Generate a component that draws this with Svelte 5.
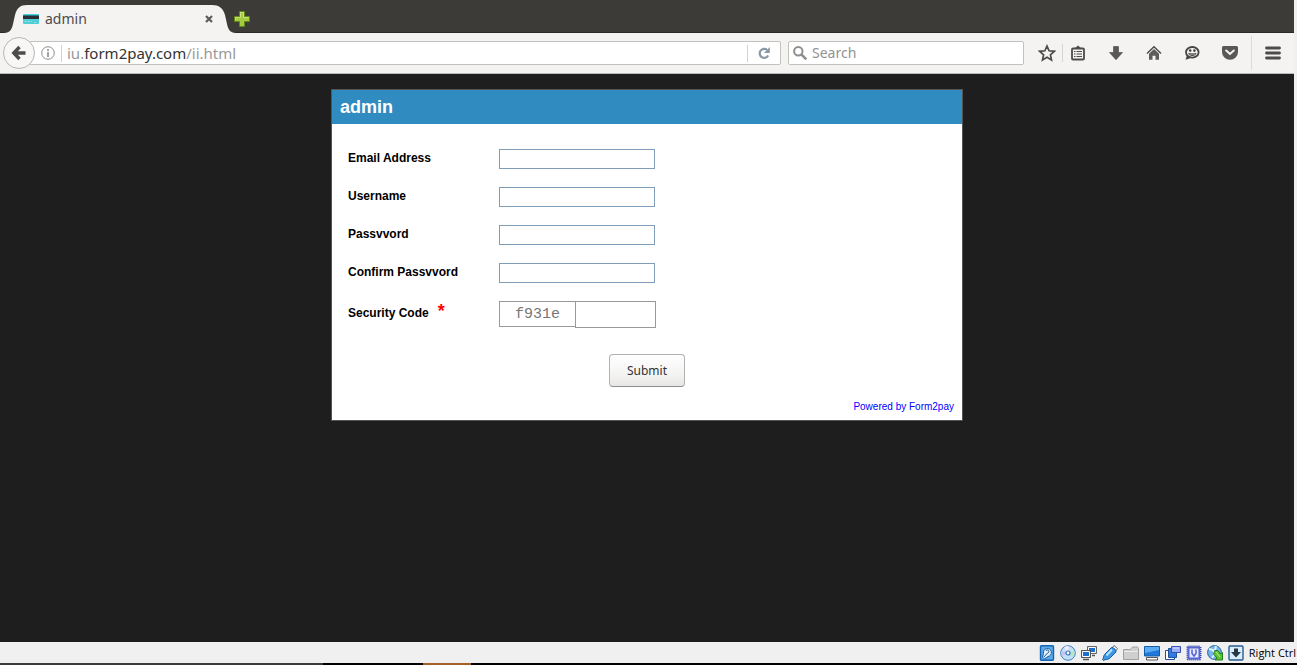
<script>
  const fields = [
    { id: 'email', label: 'Email Address', type: 'text' },
    { id: 'username', label: 'Username', type: 'text' },
    { id: 'pass', label: 'Passvvord', type: 'password' },
    { id: 'confirm', label: 'Confirm Passvvord', type: 'password' }
  ];
</script>

<div class="desktop">
  <div class="window">
    <div class="tabs">
      <div class="tab">
        <svg class="shape" width="232" height="29" viewBox="0 0 232 29" aria-hidden="true">
          <path d="M0 29C6 29 8 25 9 20L11 11C13 4 16 1 23 1H208C215 1 219 4 221 11L223 20C224 25 226 29 232 29Z" fill="#f4f3f1" />
        </svg>
        <svg class="card-icon" width="16" height="10" viewBox="0 0 16 10" aria-hidden="true">
          <rect width="16" height="10" rx="1" fill="#4fcfd3" />
          <path d="M0 1h16v1H0z" fill="#237e88" />
          <path d="M0 2h16v3H0z" fill="#2b3036" />
          <path d="M2 7.500h7M11 8.500h3" stroke="#8fe6e8" stroke-dasharray="2 1" />
        </svg>
        <span class="title">admin</span>
        <button class="plain close" aria-label="Close tab">
          <svg width="8" height="8" viewBox="0 0 8 8"><path d="M1 1l6 6M7 1L1 7" stroke="#5d5c59" stroke-width="2.200" /></svg>
        </button>
      </div>
      <button class="plain new" aria-label="New tab">
        <svg width="16" height="16" viewBox="0 0 16 16">
          <path d="M5.500.5h5v5h5v5h-5v5h-5v-5h-5v-5h5z" fill="#a4ca42" stroke="#5c8a14" />
          <path d="M6.500 6.500v-5h3v5h5" fill="none" stroke="#cbe27f" />
          <path d="M1.500 9V6.500h5" fill="none" stroke="#c5e077" />
        </svg>
      </button>
    </div>

    <div class="nav">
      <button class="plain back" aria-label="Back">
        <svg width="16" height="16" viewBox="0 0 16 16"><path d="M8.500 2L2.800 8l5.700 6M3 8h11.500" fill="none" stroke="#4c4c4c" stroke-width="3.400" /></svg>
      </button>
      <div class="url">
        <svg width="14" height="14" viewBox="0 0 14 14" aria-hidden="true">
          <circle cx="7" cy="7" r="6.300" fill="none" stroke="#8c8c8c" />
          <path d="M7 3v2M7 6v5" stroke="#8c8c8c" stroke-width="1.600" />
        </svg>
        <span class="sep"></span>
        <span class="address">iu.<b>form2pay.com</b>/ii.html</span>
        <span class="sep"></span>
        <button class="plain reload" aria-label="Reload">
          <svg width="12" height="12" viewBox="0 0 12 12">
            <path d="M9.200 3A4.500 4.500 0 1 0 10.200 8.500" fill="none" stroke="#8a98a5" stroke-width="2.200" />
            <path d="M11.800 0v6H6z" fill="#8a98a5" />
          </svg>
        </button>
      </div>
      <label class="search">
        <svg width="14" height="14" viewBox="0 0 14 14" aria-hidden="true">
          <circle cx="5.300" cy="5.300" r="4.200" fill="none" stroke="#8e8e8e" stroke-width="2" />
          <path d="M8.300 8.300l5 5" stroke="#8e8e8e" stroke-width="2.600" />
        </svg>
        <input type="text" placeholder="Search" aria-label="Search" />
      </label>
      <div class="tools">
        <button class="plain first" aria-label="Bookmark this page">
          <svg width="18" height="18" viewBox="0 0 18 18"><path d="M9 2l2.100 4.800 5.200.5-3.900 3.500 1.100 5.200L9 13.300 4.500 16l1.100-5.200-3.900-3.500 5.200-.5z" fill="none" stroke="#4c4c4c" stroke-width="1.700" /></svg>
        </button>
        <button class="plain" aria-label="Bookmarks">
          <svg width="16" height="16" viewBox="0 0 16 16">
            <path d="M4.500 3.500L8 .5l3.500 3z" fill="#4c4c4c" />
            <rect x="2" y="3.500" width="12" height="11" rx="1" fill="#f4f3f1" stroke="#4c4c4c" stroke-width="1.800" />
            <path d="M4 6.500h1.500M6.500 6.500H12M4 9h1.500M6.500 9H12M4 11.500h1.500M6.500 11.500H12" stroke="#4c4c4c" stroke-width="1.200" />
          </svg>
        </button>
        <button class="plain" aria-label="Downloads">
          <svg width="16" height="16" viewBox="0 0 16 16"><path d="M5.500 1.500h5v6h4L8 14.800 1.500 7.500h4z" fill="#585858" stroke="#444" stroke-width=".6" /></svg>
        </button>
        <button class="plain" aria-label="Home">
          <svg width="16" height="16" viewBox="0 0 16 16">
            <path d="M1 8.500L8 1.800l7 6.700" fill="none" stroke="#4c4c4c" stroke-width="1.500" />
            <path d="M3 8.800l5-4.800 5 4.800v6H9.500v-4h-3v4H3z" fill="#5c5c5c" />
          </svg>
        </button>
        <button class="plain" aria-label="Chat">
          <svg width="16" height="16" viewBox="0 0 16 16">
            <path d="M1.500 14.700l1.500-4.500 4 2.800z" fill="#444" />
            <ellipse cx="8.300" cy="7.300" rx="6.300" ry="5.300" fill="#f4f3f1" stroke="#444" stroke-width="1.800" />
            <path d="M4.200 8h8.200c-.5 4-7.700 4-8.200 0z" fill="#444" />
            <path d="M5.400 9h5.800" stroke="#ddd" stroke-width=".8" />
            <circle cx="6.200" cy="5.600" r="1.300" fill="#444" /><circle cx="10.400" cy="5.600" r="1.300" fill="#444" />
          </svg>
        </button>
        <button class="plain" aria-label="Pocket">
          <svg width="16" height="16" viewBox="0 0 16 16">
            <path d="M1.500 1h13a1.500 1.500 0 0 1 1.500 1.500V7A8 7.800 0 0 1 0 7V2.500A1.500 1.500 0 0 1 1.500 1z" fill="#585858" />
            <path d="M4.200 5.500L8 9l3.800-3.500" fill="none" stroke="#f4f3f1" stroke-width="2" stroke-linecap="round" />
          </svg>
        </button>
        <button class="plain menu" aria-label="Open menu">
          <svg width="16" height="14" viewBox="0 0 16 14"><path d="M1.500 2h13M1.500 7h13M1.500 12h13" stroke="#4c4c4c" stroke-width="2.800" stroke-linecap="round" /></svg>
        </button>
      </div>
    </div>

    <main>
      <form onsubmit={(e) => e.preventDefault()}>
        <h1>admin</h1>
        <div class="rows">
          {#each fields as f}
            <div class="row">
              <label for={f.id}>{f.label}</label>
              <input id={f.id} type={f.type} />
            </div>
          {/each}
          <div class="row code">
            <label for="code">Security Code <span class="star">*</span></label>
            <span class="captcha">f931e</span>
            <input id="code" type="text" />
          </div>
        </div>
        <button class="submit">Submit</button>
        <a href="#powered">Powered by Form2pay</a>
      </form>
    </main>
  </div>

  <footer>
    <svg width="16" height="16" viewBox="0 0 16 16" aria-hidden="true">
      <rect x="1.500" y=".8" width="13" height="14.400" rx="1" fill="#5aaae8" stroke="#1463b4" stroke-width="1.400" />
      <path d="M4.500 8.500A4 4 0 1 1 9 11.500L5.500 14 3.500 12z" fill="#e2f1fc" stroke="#1b5c9e" />
      <path d="M7 6a1.500 1.500 0 1 1 1.500 2L5 12" fill="none" stroke="#1b5c9e" />
    </svg>
    <svg width="16" height="16" viewBox="0 0 16 16" aria-hidden="true">
      <circle cx="8" cy="8" r="7.300" fill="#c3e0f6" stroke="#3a82c4" />
      <path d="M8 8L4 2.300A7 7 0 0 1 9 1.200z" fill="#f3e9fa" />
      <path d="M8 8l6.300-2A6.500 6.500 0 0 1 13 12z" fill="#b6e7c1" />
      <path d="M8 8L2 11a6.500 6.500 0 0 1-.5-5z" fill="#c8c0f0" />
      <circle cx="8" cy="8" r="2" fill="#fff" stroke="#2e78c0" stroke-width="1.200" />
    </svg>
    <svg width="16" height="16" viewBox="0 0 16 16" aria-hidden="true">
      <path d="M6.500 1.500h9v7h-9z" fill="#1b6fd0" stroke="#666" />
      <path d="M7.500 2.500h7v5h-7z" fill="none" stroke="#fff" />
      <path d="M11 10.500h3M2 14.500h6" stroke="#555" stroke-width="1.500" />
      <path d="M.5 5.500h9v7h-9z" fill="#1b6fd0" stroke="#555" />
      <path d="M1.500 6.500h7v5h-7z" fill="none" stroke="#fff" />
    </svg>
    <svg width="16" height="16" viewBox="0 0 16 16" aria-hidden="true">
      <path d="M9.500 3.500l2.500-3 3.500 3-2.500 3.500z" fill="#fff" stroke="#666" />
      <path d="M3 9l6.500-6.500c2.500 0 4.500 2 4.500 4.500L7.500 13.500C5.500 15 3 14 1.500 15.500L.5 14.500C2 13 1 11 3 9z" fill="#3c98e4" stroke="#165da4" />
      <path d="M4.500 10.500l5.500-6" stroke="#b5e0fa" stroke-width="2" />
    </svg>
    <svg width="16" height="16" viewBox="0 0 16 16" aria-hidden="true">
      <path d="M.5 14.500v-10h7l2-2.500h5l1 1.500v11z" fill="#cfcfcf" stroke="#a0a0a0" />
      <path d="M1 6.500h14" stroke="#ececec" />
    </svg>
    <svg width="16" height="16" viewBox="0 0 16 16" aria-hidden="true">
      <path d="M.5 1.500h15v9.500H.5z" fill="#1f78dc" stroke="#145ca8" />
      <path d="M1 2h14v3L1 8z" fill="#5babf3" />
      <path d="M2.500 12.500h11v2.500h-11z" fill="#fff" stroke="#555" />
    </svg>
    <svg width="16" height="16" viewBox="0 0 16 16" aria-hidden="true">
      <path d="M.5 5.500h9v9h-9z" fill="#fff" stroke="#234f9a" />
      <path d="M3.500 3.500h8v9h-8z" fill="#2f7ddc" stroke="#234f9a" />
      <path d="M6.500 1.500h9v6h-9z" fill="#9aaef5" stroke="#3b4fb4" />
      <path d="M8 3h6" stroke="#d6dfff" />
    </svg>
    <svg width="16" height="16" viewBox="0 0 16 16" aria-hidden="true">
      <rect x="1.500" y="1.500" width="13" height="13" rx="1" fill="#6e7fe0" stroke="#3946aa" stroke-dasharray="1 1" stroke-width="2" />
      <rect x="2" y="2" width="12" height="12" fill="#5565d4" />
      <path d="M3.500 3.500h9v9h-9z" fill="#e6e9ff" />
      <path d="M6 4.500v4l2 2.500 2-2.500v-4" fill="none" stroke="#5361ce" stroke-width="1.500" />
    </svg>
    <svg width="16" height="16" viewBox="0 0 16 16" aria-hidden="true">
      <circle cx="7.500" cy="7.500" r="6.900" fill="#78b5ea" stroke="#25619f" />
      <path d="M2 4l4 1 2 4-3 4M9 1l-1 4" fill="none" stroke="#dff2ff" stroke-width="2" />
      <path d="M7 3.500h3l2.500 3.500 2-1.500v7.500H7l2-2L5.500 7z" fill="#5cc331" stroke="#267d1c" transform="translate(1 2)" />
      <path d="M9 7l4 5" stroke="#b9f094" />
    </svg>
    <svg width="16" height="16" viewBox="0 0 16 16" aria-hidden="true">
      <rect x="1" y="1" width="14" height="14" rx="1" fill="#d9edfa" stroke="#275c91" stroke-width="1.400" />
      <path d="M6 3.500h4v3.500h3L8 12.500 3 7h3z" fill="#263746" />
    </svg>
    <span>Right Ctrl</span>
  </footer>
  <div class="taskbar"><i class="grey"></i><i></i><i class="orange"></i></div>
</div>

<style>
  :global(body) { margin: 0; background: #f0f0f0; }
  .desktop { display: flex; flex-direction: column; min-height: 100vh; overflow: hidden; }
  .window { flex: 1; display: flex; flex-direction: column; margin-right: 3px; font-family: "Noto Sans", sans-serif; }
  .plain { display: flex; align-items: center; justify-content: center; padding: 0; border: 0; background: none; }
  svg { flex: none; display: block; }

  .tabs { display: flex; align-items: flex-end; height: 32px; padding: 0 4px; background: #3c3b37; border-bottom: 1px solid #2b2a28; }
  .tab { position: relative; display: flex; align-items: center; gap: 6px; box-sizing: border-box; width: 230px; height: 29px; padding: 0 21px 0 19px; margin-bottom: -1px; }
  .shape { position: absolute; left: 0; top: 0; }
  .card-icon, .title, .close { position: relative; }
  .title { flex: 1; font-size: 14px; line-height: 20px; color: #4c4c4c; }
  .new { padding-bottom: 5px; }

  .nav { display: flex; align-items: center; height: 40px; padding-left: 3px; background: #f4f3f1; border-bottom: 1px solid #bcbab6; }
  .back { position: relative; box-sizing: border-box; width: 32px; height: 32px; border: 1px solid #b9b7b3; border-radius: 50%; background: #f8f7f6; }
  .url, .search { display: flex; align-items: center; box-sizing: border-box; height: 24px; border: 1px solid #c3c1bd; border-radius: 2px; background: #fff; }
  .url { flex: 1; gap: 6px; margin-left: -6px; padding-left: 11px; }
  .sep { width: 1px; height: 17px; background: #d2d2d2; }
  .address { flex: 1; margin-left: -1px; font-size: 15px; color: #999; line-height: 20px; }
  .address b { font-weight: 400; color: #333; }
  .reload { width: 20px; margin-right: 6px; }
  .search { width: 236px; margin-left: 7px; padding-left: 4px; gap: 5px; }
  .search input { flex: 1; min-width: 0; padding: 0; border: 0; outline: 0; background: none; font: 14px/20px "Noto Sans", sans-serif; }
  .search input::placeholder { color: #929292; opacity: 1; }
  .tools { display: flex; align-items: center; margin-left: 7px; padding-right: 1px; }
  .tools button { width: 38px; height: 24px; }
  .tools .first { box-sizing: border-box; width: 32px; height: 18px; border-right: 1px solid #d6d4d1; margin-right: -4px; }
  .tools .menu { width: 42px; height: 34px; border-left: 1px solid #dedcd9; margin-left: 2px; }

  main { flex: 1; padding: 15px 0; background: #1e1e1e; font-family: "Liberation Sans", Arial, sans-serif; }
  form { display: flex; flex-direction: column; box-sizing: border-box; width: 632px; max-width: 100%; margin: 0 auto; border: 1px solid #545454; background: #fff; }
  h1 { margin: 0; padding: 0 8px; font-size: 18px; line-height: 34px; color: #fff; background: #308bc0; }
  .rows { display: flex; flex-direction: column; gap: 18px; padding: 25px 16px 26px; }
  .row { display: flex; align-items: flex-start; }
  .row label { width: 151px; font-size: 12px; font-weight: 700; line-height: 18px; color: #000; }
  .row input { box-sizing: border-box; width: 156px; height: 20px; padding: 1px 3px; border: 1px solid #7f9db9; background: #fff; }
  .code label { display: flex; gap: 9px; line-height: 24px; }
  .star { font-size: 18px; line-height: 20px; color: #f00; }
  .captcha { box-sizing: border-box; width: 76px; height: 26px; border: 1px solid #999; border-right: 0; font: 15px/26px "Liberation Mono", monospace; text-align: center; color: #777; }
  .code input { width: 81px; height: 27px; border-color: #999; }
  .submit { align-self: center; width: 76px; height: 33px; padding: 0; border: 1px solid #b2b2b2; border-bottom-color: #8e8e8e; border-radius: 4px; background: linear-gradient(#fff, #f4f4f3 60%, #e8e7e6); font: 12px/20px "Noto Sans", sans-serif; color: #333; }
  form a { align-self: flex-end; margin: 12px 8px 6px; font-size: 10px; line-height: 15px; color: #00f; text-decoration: none; }

  footer { display: flex; align-items: center; justify-content: flex-end; gap: 5px; height: 21px; padding-right: 1px; background: #f0f0f0; font: 11px/20px "Open Sans", sans-serif; color: #000; }
  .taskbar { display: flex; height: 2px; background: #000; }
  .taskbar i { width: 100px; }
  .taskbar .grey { width: 323px; background: #3c3b3b; }
  .taskbar .orange { width: 48px; background: #a85f23; }
</style>
